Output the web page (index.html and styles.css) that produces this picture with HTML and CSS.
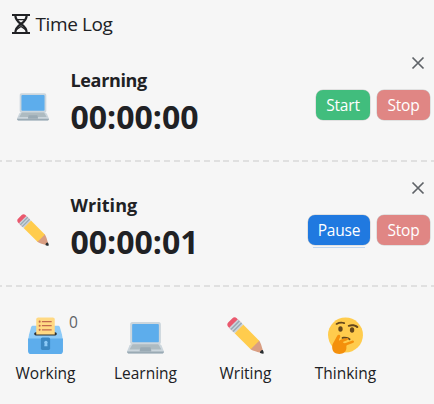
FILE: index.html
```html
<!DOCTYPE html>
<html lang="en">
<head>
<meta charset="utf-8">
<title>Time Log</title>
<link rel="stylesheet" href="styles.css">
</head>
<body>
<svg class="defs" aria-hidden="true">
  <symbol id="laptop" viewBox="0 0 36 36">
    <g transform="translate(0 2.500)">
    <path fill="#CCD6DD" d="M34 26.096c-.417-.963-.896-2.008-2-2.008h-1c1.104 0 2-.899 2-2.008V5.008C33 3.200 32.104 2.300 31 2.300H5c-1.104 0-2 .899-2 2.708V22.080c0 1.109.896 2.008 2 2.008H4c-1.104 0-1.667 1.004-2 2.008l-2 4.895C0 32.101.896 33 2 33h32c1.104 0 2-.899 2-2.009z"/>
    <path fill="#9AAAB4" d="M0 31c0 1.184.896 2 2 2h32c1.104 0 2-.816 2-2z"/>
    <path fill="#5DADEC" d="M31 21.065c0 .553-.447.935-1 .935H6c-.553 0-1-.382-1-.935V5.300c0-.553.447-1 1-1h24c.553 0 1 .447 1 1z"/>
    <path fill="#AEBBC1" d="M32.906 28.042l-1.812-3.062c-.249-.422-.642-.980-1.194-.980H6c-.553 0-.944.558-1.194.980l-1.812 3.062C2.744 28.464 2.447 29 3 29h30c.553 0 .156-.536-.094-.958z"/>
    <path fill="#9AAAB4" d="M22.375 27h-8.750c-.554 0-.625.500-.750 1l-.500 2c-.125.500.200 1 .750 1h9.750c.550 0 .875-.500.750-1l-.500-2c-.125-.500-.196-1-.750-1z"/>
    </g>
  </symbol>
  <symbol id="pencil" viewBox="0 0 36 36">
    <path fill="#D99E82" d="M35.222 33.598c-.647-2.101-1.705-6.059-2.325-7.566-.501-1.216-.969-2.438-1.544-3.014-.575-.575-1.553-.530-2.143.058 0 0-2.469 1.675-3.354 2.783-1.108.882-2.785 3.357-2.785 3.357-.590.590-.635 1.567-.060 2.143.576.575 1.798 1.043 3.015 1.544 1.506.620 5.465 1.676 7.566 2.325.359.110 1.740-1.271 1.630-1.630z"/>
    <path fill="#EA596E" d="M13.643 5.308c1.151 1.151 1.151 3.016 0 4.167l-4.167 4.168c-1.151 1.150-3.018 1.150-4.167 0L1.140 9.475c-1.150-1.151-1.150-3.016 0-4.167l4.167-4.167c1.150-1.151 3.016-1.151 4.167 0l4.169 4.167z"/>
    <path fill="#FFCC4D" d="M31.353 23.018l-4.170 4.170-4.163 4.165L7.392 15.726l8.335-8.334 15.626 15.626z"/>
    <path fill="#292F33" d="M32.078 34.763s2.709 1.489 3.441.757c.732-.732-.765-3.435-.765-3.435s-2.566.048-2.676 2.678z"/>
    <path fill="#CCD6DD" d="M2.183 10.517l8.335-8.335 5.208 5.209-8.334 8.335z"/>
    <path fill="#99AAB5" d="M3.225 11.558l8.334-8.334 1.042 1.042L4.267 12.600zm2.083 2.086l8.335-8.335 1.042 1.042-8.335 8.334z"/>
  </symbol>
  <symbol id="ballot" viewBox="0 0 36 36">
    <path fill="#8CCAF7" d="M34 17l-2-7c-.3-1-.8-1.500-2-1.500H6C4.800 8.500 4.300 9 4 10l-2 7-1 6h34z"/>
    <path fill="#5DADEC" d="M1 21h34v12c0 2-1 3-3 3H4c-2 0-3-1-3-3z"/>
    <rect x="7" y="14.800" width="22" height="3.200" rx="1.600" fill="#292F33"/>
    <path fill="#FFD983" d="M9 17V2.500c0-1.300.7-2 2-2h14c1.300 0 2 .7 2 2V17z"/>
    <path stroke="#C1694F" stroke-width="1.200" d="M14.500 4.500H24M14.500 8.500H24M14.500 12.500H24"/>
    <g fill="#C1694F"><circle cx="12.300" cy="4.500" r="1"/><circle cx="12.300" cy="8.500" r="1"/><circle cx="12.300" cy="12.500" r="1"/></g>
    <rect x="13.500" y="20" width="9" height="12" rx="1.500" fill="#3B88C3"/>
    <path fill="#8CCAF7" d="M19.700 26a1.700 1.700 0 1 0-2.600 0l-.3 2.500h3.200z"/>
  </symbol>
  <symbol id="thinking" viewBox="0 0 36 36">
    <circle fill="#FFCC4D" cx="18" cy="17.500" r="17"/>
    <path fill="#65471B" d="M14.524 21.036c-.145-.116-.258-.274-.312-.464-.134-.460.130-.918.590-1.021 4.528-1.021 7.577 1.363 7.706 1.465.384.306.459.845.173 1.205-.286.358-.828.401-1.211.097-.110-.084-2.523-1.923-6.182-1.098-.274.061-.554-.016-.764-.184z"/>
    <ellipse fill="#65471B" cx="13.119" cy="11.574" rx="2.125" ry="2.656"/>
    <ellipse fill="#65471B" cx="24.375" cy="12.636" rx="2.125" ry="2.656"/>
    <path fill="#65471B" d="M17.276 6.552c-.210.270-.570.380-.890.270-2.200-.750-4.600-.500-6.600.700-.440.250-1 .100-1.250-.320-.250-.430-.090-.980.350-1.240 2.500-1.460 5.450-1.770 8.120-.860.480.160.720.690.540 1.180-.060.110-.150.200-.270.270zM29.600 10.700c-.330.080-.680-.050-.870-.340-2.300-1.560-4.600-1.800-7.400-.950-.480.150-.980-.110-1.130-.580-.140-.480.140-.98.620-1.130 3.200-1 6.700-.6 9.300 1.240.420.280.530.850.250 1.270-.180.280-.450.450-.770.490z"/>
    <path fill="#F4900C" d="M24.200 23.100l-6.700 2.400c-1 .1-1.700-.3-1.800-.9 0-.5 1.200-.9 2-1.200 2-.8 3.100-1.700 3-2.300-.100-.600-.900-.700-1.800-.400-2.100.7-4.800.8-6.700 2.100-.500.200-.8-.2-.5-.9l1.200-2.800c.3-1-.1-1.800-1.100-1.900-.9-.1-1.500.3-2 1.200l-2.900 5.500c-1 1.800-1.900 2.700-1.900 5.300 0 4.300 2.700 6.800 7 6.800 4.100 0 6.900-2.200 6.900-6 0-1.200-.2-2 .4-2.500l5.700-2.100c1-.3 1.500-1 1.200-1.700-.3-.7-1-.9-2-.6z"/>
  </symbol>
  <symbol id="close" viewBox="0 0 14 14">
    <path d="M1.500 1.500l11 11m0-11l-11 11" fill="none" stroke="#5f6368" stroke-width="1.700"/>
  </symbol>
</svg>

<header class="header">
  <svg class="hourglass" viewBox="0 0 18 20" fill="none" stroke="#202124">
    <path stroke-width="2" d="M0 1h18M0 19h18"/>
    <path stroke-width="2.200" d="M3.300 1c0 4.500 2 6.500 5.700 9-3.700 2.500-5.700 4.500-5.700 9M14.700 1c0 4.500-2 6.500-5.700 9 3.700 2.500 5.700 4.500 5.700 9"/>
    <path stroke-width="1.300" d="M4 5.600h10M4.500 15.500L9 12.500l4.500 3"/>
  </svg>
  <h1 class="title">Time Log</h1>
</header>

<main>
  <section class="timer">
    <svg class="timer-icon"><use href="#laptop"/></svg>
    <div class="info"><h2 class="name">Learning</h2><div class="time">00:00:00</div></div>
    <div class="controls">
      <svg class="close"><use href="#close"/></svg>
      <div class="buttons"><button class="btn start">Start</button><button class="btn stop">Stop</button></div>
    </div>
  </section>
  <section class="timer">
    <svg class="timer-icon"><use href="#pencil"/></svg>
    <div class="info"><h2 class="name writing">Writing</h2><div class="time">00:00:01</div></div>
    <div class="controls">
      <svg class="close"><use href="#close"/></svg>
      <div class="buttons"><button class="btn pause">Pause</button><button class="btn stop">Stop</button></div>
    </div>
  </section>
</main>

<nav class="tasks">
  <div class="task"><svg class="task-icon"><use href="#ballot"/></svg><span class="count">0</span><span class="label">Working</span></div>
  <div class="task"><svg class="task-icon"><use href="#laptop"/></svg><span class="label">Learning</span></div>
  <div class="task"><svg class="task-icon"><use href="#pencil"/></svg><span class="label">Writing</span></div>
  <div class="task"><svg class="task-icon"><use href="#thinking"/></svg><span class="label">Thinking</span></div>
</nav>
</body>
</html>
```
FILE: styles.css
```css
* { box-sizing: border-box; }
body {
  margin: 0;
  height: 404px;
  overflow: hidden;
  background: #f6f6f6;
  color: #202124;
  font-family: "Open Sans", "Noto Sans", sans-serif;
}
h1, h2 { margin: 0; }
.defs { display: none; }
.header {
  display: flex;
  align-items: center;
  gap: 5.500px;
  height: 37px;
  padding: 11px 0 0 12px;
}
.hourglass { width: 18px; height: 20px; }
.title { font-size: 19px; font-weight: 400; line-height: 26px; letter-spacing: -0.4px; }
.timer {
  display: flex;
  height: 125px;
  padding: 0 4px 0 17px;
  background: repeating-linear-gradient(90deg, #e0e0e0 0 6px, transparent 6px 9.88px) -3.8px 100% / 450px 2px no-repeat;
}
.timer-icon { width: 32px; height: 32px; margin-top: 52px; }
.info { margin: 30px 0 0 21.500px; }
.name { font-size: 18px; font-weight: 700; line-height: 26px; letter-spacing: -0.35px; }
.writing { letter-spacing: 0.05px; }
.time { margin-top: 1px; font-size: 32px; font-weight: 700; line-height: 46px; }
.controls {
  display: flex;
  flex-direction: column;
  align-items: flex-end;
  margin-left: auto;
  padding-top: 19px;
}
.close { width: 14px; height: 14px; margin-right: 5px; }
.buttons { display: flex; gap: 7px; margin-top: 20px; }
.btn {
  position: relative;
  height: 30px;
  padding: 0;
  border: 0;
  border-radius: 7px;
  color: #fff;
  font: 400 15.500px/30px "Open Sans", "Noto Sans", sans-serif;
  letter-spacing: -0.2px;
  box-shadow: 0 0 0 0.500px #ccc;
}
.start { width: 54px; background: #41bd7d; }
.stop { width: 53px; background: #e08684; }
.pause { width: 62px; background: #2079e0; }
.pause::after {
  content: "";
  position: absolute;
  left: 5px;
  right: 5px;
  bottom: -3px;
  height: 1px;
  background: #c2d7f0;
}
.tasks { display: flex; margin-left: -4.500px; padding-top: 30px; }
.task {
  position: relative;
  display: flex;
  flex-direction: column;
  align-items: center;
  width: 100px;
}
.task-icon { width: 37px; height: 37px; }
.count { position: absolute; top: -6px; left: 73.500px; font-size: 15.500px; line-height: 22px; color: #5f6368; }
.label { margin-top: 7px; font-size: 15.500px; line-height: 24px; }
```
